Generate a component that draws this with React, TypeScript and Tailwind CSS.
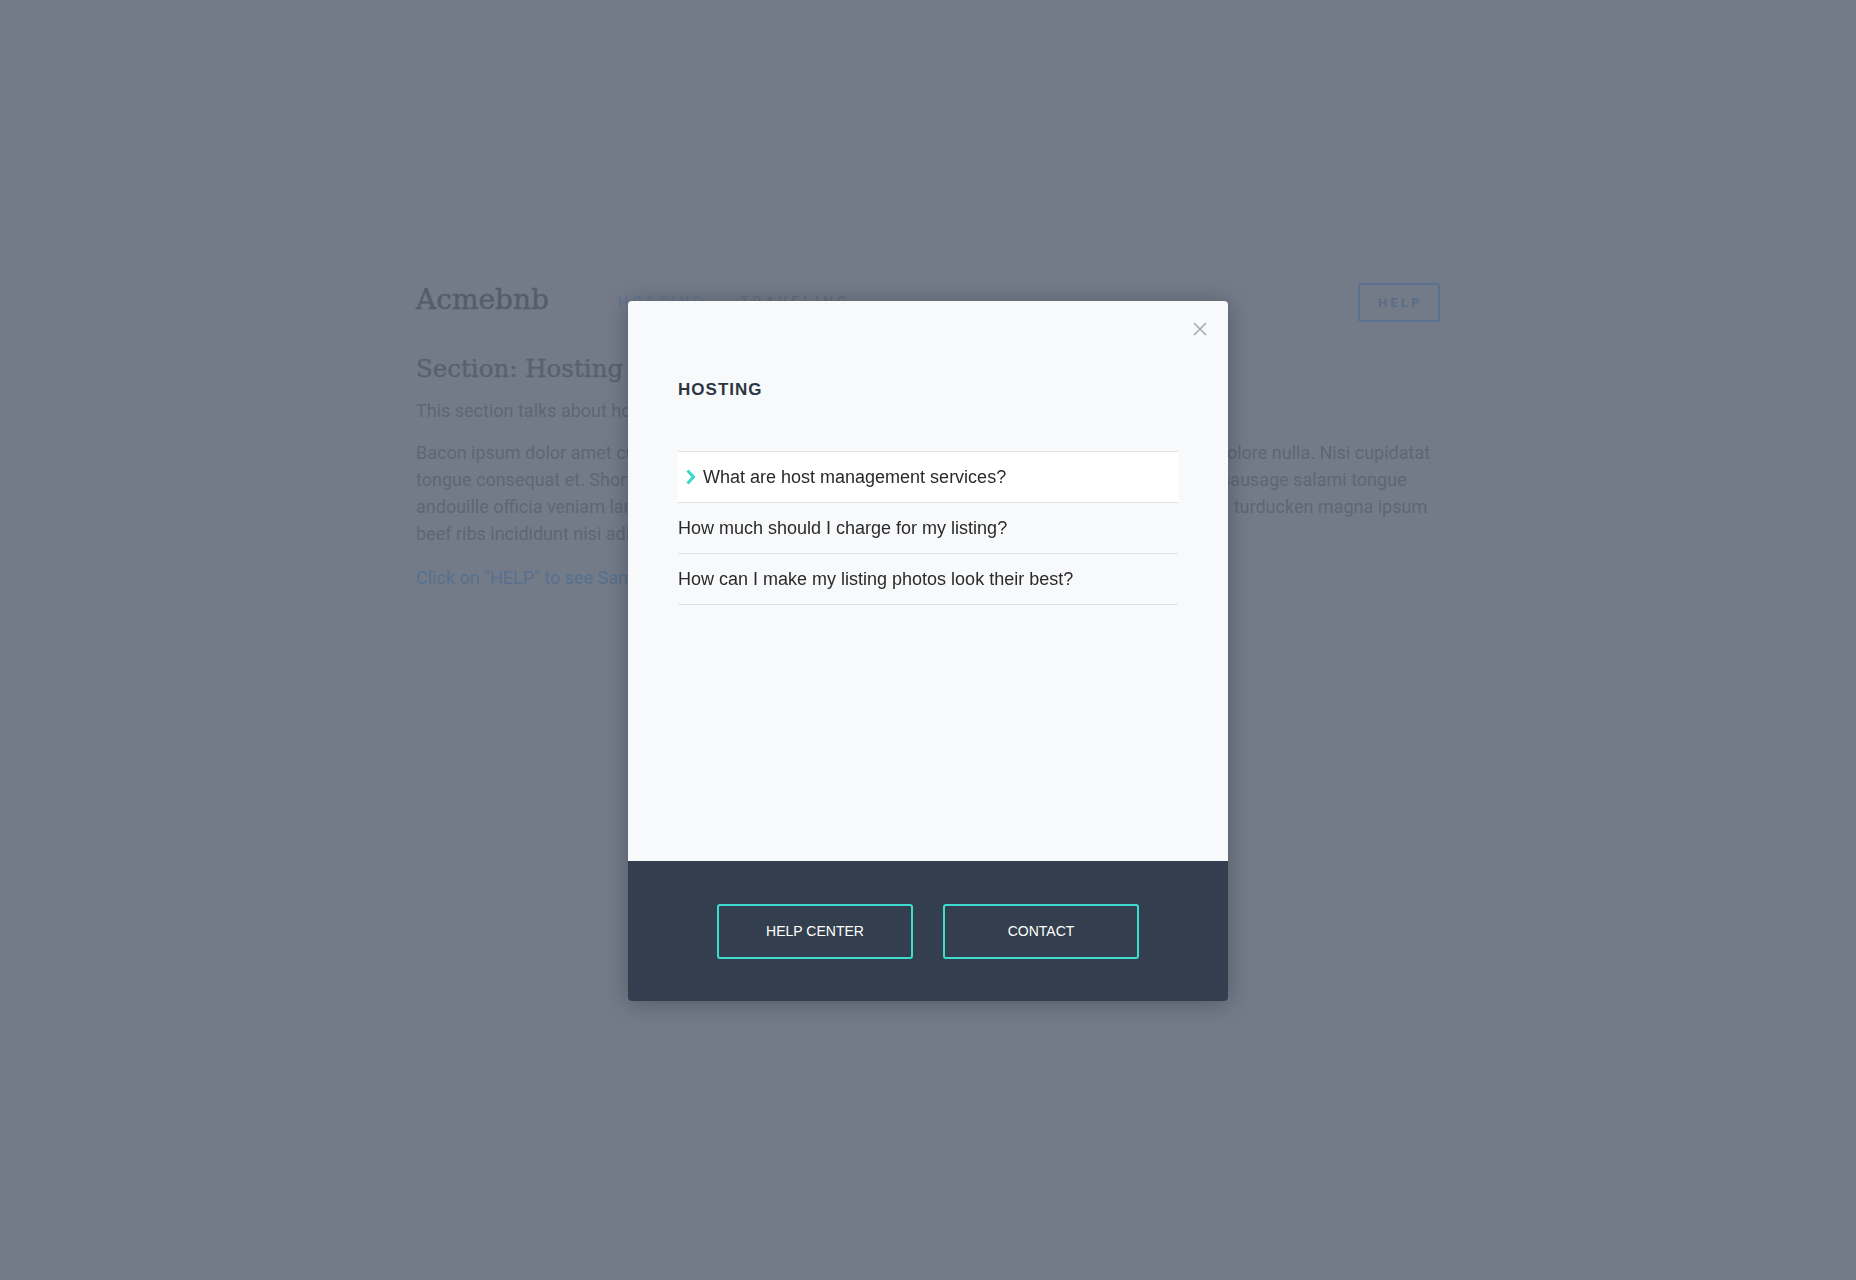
import React from "react";

const questions = [
  "What are host management services?",
  "How much should I charge for my listing?",
  "How can I make my listing photos look their best?",
];

function Chevron() {
  return (
    <svg width="11" height="16" viewBox="0 0 11 16" fill="none" className="shrink-0">
      <path d="M2.5 1.5 L8.5 8 L2.5 14.5" stroke="#36d9cb" strokeWidth="3" strokeLinecap="butt" strokeLinejoin="miter" />
    </svg>
  );
}

function CloseIcon() {
  return (
    <svg width="14" height="14" viewBox="0 0 14 14" fill="none">
      <path d="M1 1 L13 13 M13 1 L1 13" stroke="#a7abb0" strokeWidth="1.6" />
    </svg>
  );
}

export default function App() {
  return (
    <div className="relative min-h-screen w-full bg-[#747b88]">
      {/* page behind the dimmed overlay */}
      <div className="mx-auto w-[1024px] pt-[283px] font-['Roboto',sans-serif]">
        <header className="flex h-[39px] items-center">
          <div className="mt-[-5px] font-['DejaVu_Serif',serif] text-[28px] leading-none text-[#565d6a] [-webkit-text-stroke:0.5px_#565d6a]">
            Acmebnb
          </div>
          <nav className="ml-[69px] flex gap-[33px] text-[14px] uppercase tracking-[0.3em] text-[#656c7b]">
            <span className="text-[#5f7594]">Hosting</span>
            <span>Traveling</span>
          </nav>
          <button className="ml-auto flex h-[39px] w-[82px] items-center justify-center rounded-[3px] border-2 border-[#5a7290] pl-[3px] text-[13px] font-bold tracking-[0.25em] text-[#5b6d86]">
            HELP
          </button>
        </header>

        <h1 className="mt-[32px] font-['DejaVu_Serif',serif] text-[24.5px] leading-[30px] text-[#5a616e] [-webkit-text-stroke:0.4px_#5a616e]">
          Section: Hosting
        </h1>
        <p className="mt-[13px] text-[18px] leading-[27px] text-[#5f6674]">This section talks about hosting.</p>
        <p className="mt-[15px] whitespace-nowrap text-[18px] leading-[27px] text-[#5f6674]">
          Bacon ipsum dolor amet cupim pork belly shankle ribeye ham hock kielbasa pastrami exercitation in dolore nulla. Nisi cupidatat
          <br />
          tongue consequat et. Short ribs jowl boudin, brisket frankfurter chicken, meatball pig pancetta bacon sausage salami tongue
          <br />
          andouille officia veniam landjaeger bresaola tri-tip, swine chislic fatback buffalo porchetta venison, elit turducken magna ipsum
          <br />
          beef ribs incididunt nisi adipisicing cow sirloin.
        </p>
        <p className="mt-[17px] text-[18px] leading-[27px] text-[#56708f]">Click on "HELP" to see Sample FAQs for this section.</p>
      </div>

      {/* modal */}
      <div className="fixed inset-0 flex justify-center pt-[301px]">
        <div className="h-[700px] w-[600px] overflow-hidden rounded-[4px] font-['Liberation_Sans',Arial,sans-serif] shadow-[0_2px_22px_rgba(20,28,38,0.35)]">
          <div className="relative h-[560px] bg-[#f8f9fb] px-[50px] pt-[79px]">
            <button className="absolute right-[21px] top-[21px] flex h-[14px] w-[14px] items-center justify-center" aria-label="Close">
              <CloseIcon />
            </button>
            <h2 className="text-[17px] font-bold leading-[20px] tracking-[0.06em] text-[#2b3642]">HOSTING</h2>
            <ul className="mt-[51px] border-t border-[#dfe1e4]">
              {questions.map((q, i) => (
                <li
                  key={q}
                  className={
                    i === 0
                      ? "flex h-[51px] items-center gap-[7px] border-b border-[#dfe1e4] bg-white pl-[7px] text-[18px] text-[#2a2a2a]"
                      : "flex h-[51px] items-center border-b border-[#dfe1e4] text-[18px] text-[#2a2a2a]"
                  }
                >
                  {i === 0 && <Chevron />}
                  <span>{q}</span>
                </li>
              ))}
            </ul>
          </div>
          <div className="flex h-[140px] items-center justify-center gap-[30px] bg-[#333f4e]">
            <button className="h-[55px] w-[196px] rounded-[3px] border-2 border-[#3ddccd] text-[14px] text-white">HELP CENTER</button>
            <button className="h-[55px] w-[196px] rounded-[3px] border-2 border-[#3ddccd] text-[14px] text-white">CONTACT</button>
          </div>
        </div>
      </div>
    </div>
  );
}
